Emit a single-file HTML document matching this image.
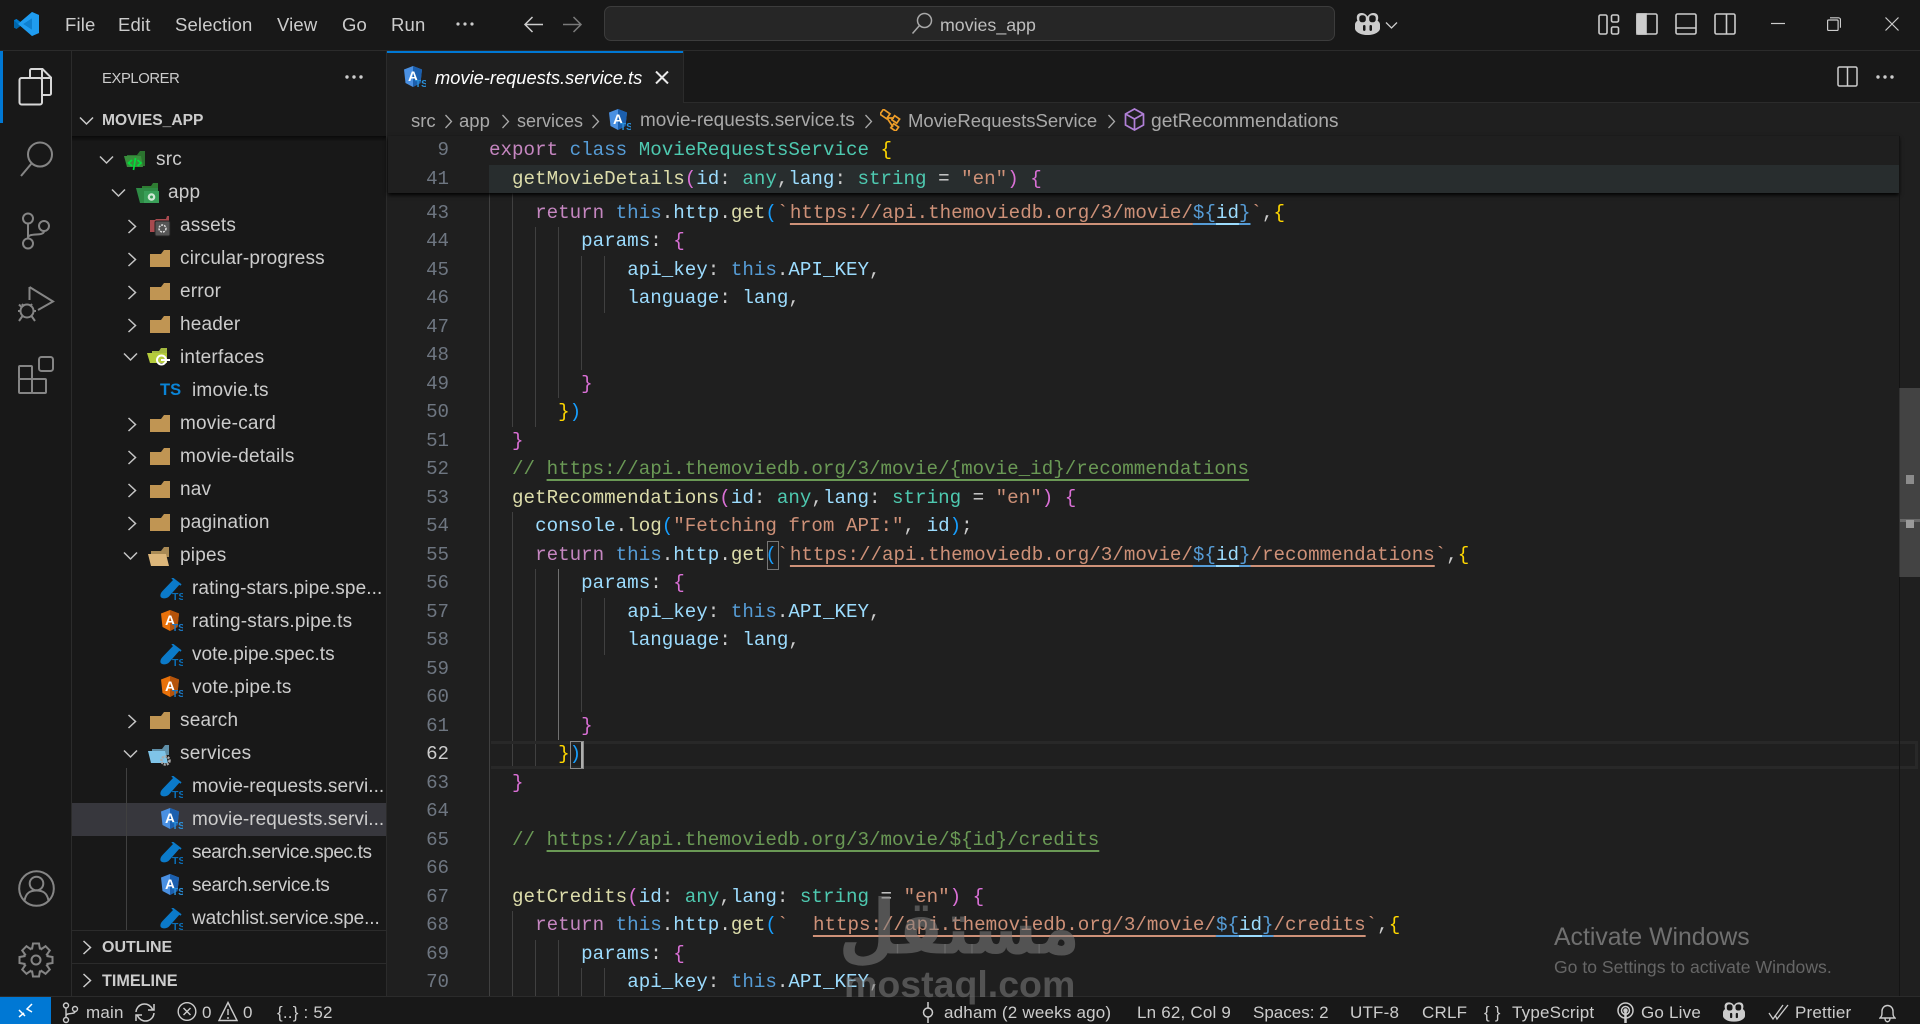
<!DOCTYPE html>
<html><head><meta charset="utf-8"><title>movies_app</title>
<style>
html,body{margin:0;padding:0;width:1920px;height:1024px;overflow:hidden;background:#1f1f1f}
body{position:relative;font-family:"Liberation Sans",sans-serif;color:#ccc}
.a,svg,.t,.r{position:absolute}
.t{white-space:pre;line-height:26px;height:26px}
.m{top:12px;font-size:18.5px;color:#ccc;letter-spacing:.15px}
.r{height:33px;line-height:33px;font-size:19px;letter-spacing:.2px;color:#ccc;white-space:pre}
.b{top:108px;font-size:18.5px;color:#a9a9a9}
.s{top:1000px;font-size:17px;color:#ccc;letter-spacing:.2px}
.code{position:absolute;left:489px;font-family:"Liberation Mono",monospace;font-size:19.2px;color:#ccc}
.code div{white-space:pre}
.code div,.nums div{height:28.5px;line-height:28.5px}
.nums{position:absolute;left:400px;width:49px;text-align:right;font-family:"Liberation Mono",monospace;font-size:19.13px;color:#6e7681}
.k{color:#c586c0}.c{color:#569cd6}.e{color:#4ec9b0}.f{color:#dcdcaa}.v{color:#9cdcfe}.q{color:#ce9178}.g{color:#6a9955}.y{color:#ffd700}.p{color:#da70d6}.w{color:#179fff}.o{color:#d4d4d4}
.u{text-decoration:underline;text-decoration-thickness:2px;text-underline-offset:5px;text-decoration-skip-ink:none}
.ml{margin-left:1.5px}
.gd{position:absolute;width:1px;background:#404040}
.act{background:#707070}
</style></head><body>

<!-- title bar -->
<div class="a" style="left:0;top:0;width:1920px;height:50px;background:#181818"></div>
<div class="a" style="left:0;top:50px;width:1920px;height:1px;background:#2b2b2b"></div>
<svg style="left:14px;top:12px" width="25" height="24" viewBox="0 0 25 24"><path fill="#0065a9" d="M18 0 7 10.500 2.500 7 0 8.300v7.400L2.500 17 7 13.500 18 24l7-3V3z"/><path fill="#007acc" d="M18 0 7 10.500 2.500 7 0 8.300 4 12l14-12z"/><path fill="#1f9cf0" d="M18 0l7 3v18l-7 3V6.500L9.500 12 18 17.500V24L4 12z"/><path fill="#0f80d0" d="M18 6.500 9.500 12 18 17.500z"/></svg>
<div class="t m" style="left:65px">File</div>
<div class="t m" style="left:118px">Edit</div>
<div class="t m" style="left:175px">Selection</div>
<div class="t m" style="left:277px">View</div>
<div class="t m" style="left:342px">Go</div>
<div class="t m" style="left:391px">Run</div>
<svg style="left:455px;top:20px" width="20" height="8"><circle cx="3" cy="4" r="1.600" fill="#ccc"/><circle cx="10" cy="4" r="1.600" fill="#ccc"/><circle cx="17" cy="4" r="1.600" fill="#ccc"/></svg>
<svg style="left:523px;top:15px" width="21" height="19" fill="none" stroke="#ccc" stroke-width="1.500"><path d="M20 9.500H2M9.500 2 2 9.500 9.500 17"/></svg>
<svg style="left:562px;top:15px" width="21" height="19" fill="none" stroke="#7a7a7a" stroke-width="1.500"><path d="M1 9.500h18M11.500 2 19 9.500 11.500 17"/></svg>
<div class="a" style="left:604px;top:6px;width:729px;height:33px;background:#262626;border:1px solid #3c3c3c;border-radius:7px"></div>
<svg style="left:911px;top:12px" width="22" height="23" fill="none" stroke="#a8a8a8" stroke-width="1.500"><circle cx="13.500" cy="8.500" r="7"/><path d="M8.500 13.500 1.500 21.500"/></svg>
<div class="t" style="left:940px;top:12px;font-size:17.800px;color:#bdbdbd">movies_app</div>
<svg style="left:1355px;top:13px" width="25" height="22" viewBox="0 0 25 22"><path fill="#ccc" d="M12.500 3.500C11 .8 8.500 0 6.200 0 3.500 0 1.800 1.800 1.800 4.500c0 1.200.2 2.300.6 3.200C1 8.500 0 10 0 11.500v4C0 18 4 22 12.500 22S25 18 25 15.500v-4c0-1.500-1-3-2.400-3.800.4-.9.600-2 .6-3.200C23.200 1.800 21.500 0 18.800 0c-2.300 0-4.800.8-6.300 3.500z"/><rect x="4.300" y="2.300" width="6.500" height="7" rx="2.600" fill="#181818"/><rect x="14.200" y="2.300" width="6.500" height="7" rx="2.600" fill="#181818"/><rect x="8" y="12" width="2.500" height="6" rx="1.200" fill="#181818"/><rect x="14.500" y="12" width="2.500" height="6" rx="1.200" fill="#181818"/></svg>
<svg style="left:1385px;top:21px" width="13" height="9" fill="none" stroke="#ccc" stroke-width="1.300"><path d="M1 1.500 6.500 7 12 1.500"/></svg>
<svg style="left:1598px;top:13px" width="22" height="22" fill="none" stroke="#ccc" stroke-width="1.600"><rect x="1" y="2" width="8" height="19" rx="1.500"/><rect x="13.500" y="2" width="7" height="7" rx="1.500"/><rect x="13.500" y="14" width="7" height="7" rx="1.500"/></svg>
<svg style="left:1636px;top:13px" width="22" height="22" fill="none" stroke="#ccc" stroke-width="1.600"><rect x="1" y="1" width="20" height="20" rx="1.500"/><rect x="1" y="1" width="9" height="20" fill="#ccc"/></svg>
<svg style="left:1675px;top:13px" width="22" height="22" fill="none" stroke="#ccc" stroke-width="1.600"><rect x="1" y="1" width="20" height="20" rx="1.500"/><path d="M1 15h20"/></svg>
<svg style="left:1714px;top:13px" width="22" height="22" fill="none" stroke="#ccc" stroke-width="1.600"><rect x="1" y="1" width="20" height="20" rx="1.500"/><path d="M12.500 1v20"/></svg>
<svg style="left:1771px;top:22px" width="14" height="3"><path d="M0 1.500h14" stroke="#ccc" stroke-width="1.200"/></svg>
<svg style="left:1827px;top:17px" width="14" height="14" fill="none" stroke="#ccc" stroke-width="1.200"><rect x=".6" y="3" width="10.500" height="10.500" rx="1"/><path d="M3 .8h8.500a2 2 0 0 1 2 2v8"/></svg>
<svg style="left:1885px;top:17px" width="14" height="14" fill="none" stroke="#ccc" stroke-width="1.200"><path d="M.5.500l13 13M13.500.500l-13 13"/></svg>

<!-- activity bar -->
<div class="a" style="left:0;top:51px;width:71px;height:945px;background:#181818"></div>
<div class="a" style="left:71px;top:51px;width:1px;height:945px;background:#2b2b2b"></div>
<div class="a" style="left:0;top:51px;width:3px;height:72px;background:#0078d4"></div>
<svg style="left:18px;top:68px" width="35" height="38" fill="none" stroke="#d7d7d7" stroke-width="2"><path d="M12 9V2.500a1.500 1.500 0 0 1 1.500-1.500h11L33 9.500V25.500a1.500 1.500 0 0 1-1.500 1.500H24"/><path d="M24 1v9h9"/><rect x="1.500" y="10" width="22.500" height="26.500" rx="2"/></svg>
<svg style="left:20px;top:141px" width="34" height="36" fill="none" stroke="#858585" stroke-width="2"><circle cx="20" cy="13.500" r="12"/><path d="M11.500 22.500 1 35"/></svg>
<svg style="left:21px;top:212px" width="30" height="38" fill="none" stroke="#858585" stroke-width="2"><circle cx="7" cy="6.500" r="5"/><circle cx="7" cy="31.500" r="5"/><circle cx="23" cy="14" r="5"/><path d="M7 11.500v15M7 26c0-6 16-1 16-7"/></svg>
<svg style="left:18px;top:285px" width="37" height="37" fill="none" stroke="#858585" stroke-width="2"><path d="M11.500 2 35 16.500 20 25"/><path d="M11.500 2v13"/><circle cx="9" cy="26" r="6.500"/><path d="M4 19l2 2.500M14 19l-2 2.500M0 26h2.500M15.500 26H18M1 36l3.500-5M17 36l-3.500-5M1 19.500l3 3"/></svg>
<svg style="left:18px;top:356px" width="37" height="38" fill="none" stroke="#858585" stroke-width="2"><rect x="1" y="10" width="13" height="13" rx="1"/><rect x="14" y="23" width="14" height="14" rx="1"/><rect x="1" y="23" width="13" height="14" rx="1"/><rect x="21" y="1" width="14" height="14" rx="2.500"/></svg>
<svg style="left:18px;top:870px" width="37" height="37" fill="none" stroke="#858585" stroke-width="2"><circle cx="18.500" cy="18.500" r="17.300"/><circle cx="18.500" cy="13.500" r="6.800"/><path d="M6.500 30.500c1.500-8 6-10 12-10s10.500 2 12 10"/></svg>
<svg style="left:18px;top:942px" width="36" height="36" fill="none" stroke="#858585" stroke-width="2"><circle cx="18" cy="18" r="12.500"/><circle cx="18" cy="18" r="4.500"/>
<g fill="#181818"><path d="M14 7.500 15 1.500h6L22 7.500"/><path transform="rotate(45 18 18)" d="M14 7.500 15 1.500h6L22 7.500"/><path transform="rotate(90 18 18)" d="M14 7.500 15 1.500h6L22 7.500"/><path transform="rotate(135 18 18)" d="M14 7.500 15 1.500h6L22 7.500"/><path transform="rotate(180 18 18)" d="M14 7.500 15 1.500h6L22 7.500"/><path transform="rotate(225 18 18)" d="M14 7.500 15 1.500h6L22 7.500"/><path transform="rotate(270 18 18)" d="M14 7.500 15 1.500h6L22 7.500"/><path transform="rotate(315 18 18)" d="M14 7.500 15 1.500h6L22 7.500"/></g></svg>

<!-- sidebar -->
<div class="a" style="left:72px;top:51px;width:314px;height:945px;background:#181818"></div>
<div class="a" style="left:386px;top:51px;width:1px;height:945px;background:#2b2b2b"></div>
<div class="t" style="left:102px;top:66px;font-size:14.800px;letter-spacing:-.4px;color:#ccc">EXPLORER</div>
<svg style="left:344px;top:73px" width="20" height="8"><circle cx="3" cy="4" r="1.700" fill="#ccc"/><circle cx="10" cy="4" r="1.700" fill="#ccc"/><circle cx="17" cy="4" r="1.700" fill="#ccc"/></svg>
<svg style="left:79px;top:116px" width="15" height="10" fill="none" stroke="#ccc" stroke-width="1.500"><path d="M1 1.500 7.500 8 14 1.500"/></svg>
<div class="t" style="left:102px;top:108px;font-size:15.600px;font-weight:bold;color:#ccc">MOVIES_APP</div>
<div class="a" style="left:72px;top:136px;width:314px;height:5px;background:linear-gradient(#0a0a0a,#161616)"></div>

<div class="a" style="left:72px;top:803px;width:314px;height:33px;background:#37373d"></div>
<div class="a" style="left:126px;top:768px;width:1px;height:162px;background:#404040"></div>

<svg style="left:99px;top:155px" width="15" height="10" fill="none" stroke="#c5c5c5" stroke-width="1.500"><path d="M1 1.500 7.500 8 14 1.500"/></svg>
<svg style="left:124px;top:150px" width="23" height="21"><path fill="#2e7d32" d="M3 5h10l3-4h5v15H3z" opacity=".9"/><path fill="#388e3c" d="M0 6h17l2 11H3z"/><path fill="none" stroke="#00e03a" stroke-width="1.700" d="M8 10l-3.500 3 3.500 3M13.500 10l3.500 3-3.500 3M11.500 8l-2 12"/></svg>
<div class="r" style="left:156px;top:143px">src</div>
<svg style="left:111px;top:188px" width="15" height="10" fill="none" stroke="#c5c5c5" stroke-width="1.500"><path d="M1 1.500 7.500 8 14 1.500"/></svg>
<svg style="left:136px;top:183px" width="23" height="21"><path fill="#2e7d32" d="M6 3h9l2-3h5v8H6z"/><path fill="#2e8b45" d="M0 5h22v15H4z"/><path fill="#399f58" d="M8 8h15v12H8z"/><circle cx="15.500" cy="14" r="3.800" fill="#cfe8d5"/><circle cx="15.500" cy="14" r="1.500" fill="#399f58"/></svg>
<div class="r" style="left:168px;top:176px">app</div>
<svg style="left:127px;top:219px" width="10" height="15" fill="none" stroke="#c5c5c5" stroke-width="1.500"><path d="M1.500 1 8.500 7.500 1.500 14"/></svg>
<svg style="left:150px;top:216px" width="21" height="21"><path fill="#a84a4f" d="M0 4h5l1-1h10l1-3h2v16H0z"/><rect x="5" y="5" width="15" height="15" rx="1.500" fill="#555" stroke="#222" stroke-width="1"/><circle cx="12.500" cy="12.500" r="3.500" fill="none" stroke="#ddd" stroke-width="1.500" stroke-dasharray="2 1"/></svg>
<div class="r" style="left:180px;top:209px">assets</div>
<svg style="left:127px;top:252px" width="10" height="15" fill="none" stroke="#c5c5c5" stroke-width="1.500"><path d="M1.500 1 8.500 7.500 1.500 14"/></svg>
<svg style="left:150px;top:250px" width="20" height="17"><path fill="#c09553" d="M0 4h11l3-4h6v17H0z"/></svg>
<div class="r" style="left:180px;top:242px">circular-progress</div>
<svg style="left:127px;top:285px" width="10" height="15" fill="none" stroke="#c5c5c5" stroke-width="1.500"><path d="M1.500 1 8.500 7.500 1.500 14"/></svg>
<svg style="left:150px;top:283px" width="20" height="17"><path fill="#c09553" d="M0 4h11l3-4h6v17H0z"/></svg>
<div class="r" style="left:180px;top:275px">error</div>
<svg style="left:127px;top:318px" width="10" height="15" fill="none" stroke="#c5c5c5" stroke-width="1.500"><path d="M1.500 1 8.500 7.500 1.500 14"/></svg>
<svg style="left:150px;top:316px" width="20" height="17"><path fill="#c09553" d="M0 4h11l3-4h6v17H0z"/></svg>
<div class="r" style="left:180px;top:308px">header</div>
<svg style="left:123px;top:352px" width="15" height="10" fill="none" stroke="#c5c5c5" stroke-width="1.500"><path d="M1 1.500 7.500 8 14 1.500"/></svg>
<svg style="left:147px;top:348px" width="24" height="19"><path fill="#a3b93f" d="M5 3h7l2-3h6v9H5z"/><path fill="#b5cc3c" d="M0 5h20v10H3z"/><circle cx="14.500" cy="12" r="4.500" fill="none" stroke="#fff" stroke-width="2"/><path d="M14 12h9" stroke="#fff" stroke-width="2"/></svg>
<div class="r" style="left:180px;top:341px">interfaces</div>
<div class="t" style="left:160px;top:377px;font-size:16.500px;font-weight:bold;color:#0a84d6">TS</div>
<div class="r" style="left:192px;top:374px">imovie.ts</div>
<svg style="left:127px;top:417px" width="10" height="15" fill="none" stroke="#c5c5c5" stroke-width="1.500"><path d="M1.500 1 8.500 7.500 1.500 14"/></svg>
<svg style="left:150px;top:415px" width="20" height="17"><path fill="#c09553" d="M0 4h11l3-4h6v17H0z"/></svg>
<div class="r" style="left:180px;top:407px">movie-card</div>
<svg style="left:127px;top:450px" width="10" height="15" fill="none" stroke="#c5c5c5" stroke-width="1.500"><path d="M1.500 1 8.500 7.500 1.500 14"/></svg>
<svg style="left:150px;top:448px" width="20" height="17"><path fill="#c09553" d="M0 4h11l3-4h6v17H0z"/></svg>
<div class="r" style="left:180px;top:440px">movie-details</div>
<svg style="left:127px;top:483px" width="10" height="15" fill="none" stroke="#c5c5c5" stroke-width="1.500"><path d="M1.500 1 8.500 7.500 1.500 14"/></svg>
<svg style="left:150px;top:481px" width="20" height="17"><path fill="#c09553" d="M0 4h11l3-4h6v17H0z"/></svg>
<div class="r" style="left:180px;top:473px">nav</div>
<svg style="left:127px;top:516px" width="10" height="15" fill="none" stroke="#c5c5c5" stroke-width="1.500"><path d="M1.500 1 8.500 7.500 1.500 14"/></svg>
<svg style="left:150px;top:514px" width="20" height="17"><path fill="#c09553" d="M0 4h11l3-4h6v17H0z"/></svg>
<div class="r" style="left:180px;top:506px">pagination</div>
<svg style="left:123px;top:551px" width="15" height="10" fill="none" stroke="#c5c5c5" stroke-width="1.500"><path d="M1 1.500 7.500 8 14 1.500"/></svg>
<svg style="left:148px;top:547px" width="22" height="19"><path fill="#a98a55" d="M3 4h10l3-4h5v10H3z"/><path fill="#dcb67a" d="M0 7h18l3 12H3z"/></svg>
<div class="r" style="left:180px;top:539px">pipes</div>

<svg style="left:160px;top:578px" width="23" height="22"><path fill="#0b7ac9" d="M14 1 20 6 9 18.500C6.500 21 1.500 21 .5 18.500 0 16 1.500 14 3 12.500z"/><path stroke="#0b7ac9" stroke-width="1.800" fill="none" d="M12 0l9 7"/><text x="12" y="22" font-size="10.500" font-weight="bold" fill="#0b6fb8" font-family="Liberation Sans,sans-serif">TS</text></svg>
<div class="r" style="left:192px;top:572px;letter-spacing:.1px">rating-stars.pipe.spe...</div>
<svg style="left:161px;top:610px" width="22" height="22"><path fill="#e8710a" d="M9 0 18 3.500 16.500 17 9 21 1.500 17 0 3.500z"/><path fill="#b5530a" d="M9 0 18 3.500 16.500 17 9 21z"/><text x="4" y="15" font-size="14" font-weight="bold" fill="#fff" font-family="Liberation Sans,sans-serif">A</text><text x="11" y="21" font-size="10" font-weight="bold" fill="#1b78c4" font-family="Liberation Sans,sans-serif">TS</text></svg>
<div class="r" style="left:192px;top:605px">rating-stars.pipe.ts</div>
<svg style="left:160px;top:644px" width="23" height="22"><path fill="#0b7ac9" d="M14 1 20 6 9 18.500C6.500 21 1.500 21 .5 18.500 0 16 1.500 14 3 12.500z"/><path stroke="#0b7ac9" stroke-width="1.800" fill="none" d="M12 0l9 7"/><text x="12" y="22" font-size="10.500" font-weight="bold" fill="#0b6fb8" font-family="Liberation Sans,sans-serif">TS</text></svg>
<div class="r" style="left:192px;top:638px;letter-spacing:0">vote.pipe.spec.ts</div>
<svg style="left:161px;top:676px" width="22" height="22"><path fill="#e8710a" d="M9 0 18 3.500 16.500 17 9 21 1.500 17 0 3.500z"/><path fill="#b5530a" d="M9 0 18 3.500 16.500 17 9 21z"/><text x="4" y="15" font-size="14" font-weight="bold" fill="#fff" font-family="Liberation Sans,sans-serif">A</text><text x="11" y="21" font-size="10" font-weight="bold" fill="#1b78c4" font-family="Liberation Sans,sans-serif">TS</text></svg>
<div class="r" style="left:192px;top:671px">vote.pipe.ts</div>
<svg style="left:127px;top:714px" width="10" height="15" fill="none" stroke="#c5c5c5" stroke-width="1.500"><path d="M1.500 1 8.500 7.500 1.500 14"/></svg>
<svg style="left:150px;top:712px" width="20" height="17"><path fill="#c09553" d="M0 4h11l3-4h6v17H0z"/></svg>
<div class="r" style="left:180px;top:704px">search</div>
<svg style="left:123px;top:749px" width="15" height="10" fill="none" stroke="#c5c5c5" stroke-width="1.500"><path d="M1 1.500 7.500 8 14 1.500"/></svg>
<svg style="left:148px;top:745px" width="24" height="21"><path fill="#5f8fa8" d="M4 4h10l3-4h4v10H4z"/><path fill="#7fc4e8" d="M0 6h17l3 12H3z"/><circle cx="17.500" cy="15.500" r="4" fill="none" stroke="#aaa" stroke-width="2.500" stroke-dasharray="2 1"/></svg>
<div class="r" style="left:180px;top:737px">services</div>
<svg style="left:160px;top:776px" width="23" height="22"><path fill="#0b7ac9" d="M14 1 20 6 9 18.500C6.500 21 1.500 21 .5 18.500 0 16 1.500 14 3 12.500z"/><path stroke="#0b7ac9" stroke-width="1.800" fill="none" d="M12 0l9 7"/><text x="12" y="22" font-size="10.500" font-weight="bold" fill="#0b6fb8" font-family="Liberation Sans,sans-serif">TS</text></svg>
<div class="r" style="left:192px;top:770px;letter-spacing:.05px">movie-requests.servi...</div>
<svg style="left:161px;top:808px" width="22" height="22"><path fill="#4a90e2" d="M9 0 18 3.500 16.500 17 9 21 1.500 17 0 3.500z"/><path fill="#1b5fae" d="M9 0 18 3.500 16.500 17 9 21z"/><text x="4" y="15" font-size="14" font-weight="bold" fill="#fff" font-family="Liberation Sans,sans-serif">A</text><text x="11" y="21" font-size="10" font-weight="bold" fill="#2b8fd8" font-family="Liberation Sans,sans-serif">TS</text></svg>
<div class="r" style="left:192px;top:803px;letter-spacing:.05px">movie-requests.servi...</div>
<svg style="left:160px;top:842px" width="23" height="22"><path fill="#0b7ac9" d="M14 1 20 6 9 18.500C6.500 21 1.500 21 .5 18.500 0 16 1.500 14 3 12.500z"/><path stroke="#0b7ac9" stroke-width="1.800" fill="none" d="M12 0l9 7"/><text x="12" y="22" font-size="10.500" font-weight="bold" fill="#0b6fb8" font-family="Liberation Sans,sans-serif">TS</text></svg>
<div class="r" style="left:192px;top:836px;letter-spacing:-.38px">search.service.spec.ts</div>
<svg style="left:161px;top:874px" width="22" height="22"><path fill="#4a90e2" d="M9 0 18 3.500 16.500 17 9 21 1.500 17 0 3.500z"/><path fill="#1b5fae" d="M9 0 18 3.500 16.500 17 9 21z"/><text x="4" y="15" font-size="14" font-weight="bold" fill="#fff" font-family="Liberation Sans,sans-serif">A</text><text x="11" y="21" font-size="10" font-weight="bold" fill="#2b8fd8" font-family="Liberation Sans,sans-serif">TS</text></svg>
<div class="r" style="left:192px;top:869px;letter-spacing:-.3px">search.service.ts</div>
<svg style="left:160px;top:908px" width="23" height="22"><path fill="#0b7ac9" d="M14 1 20 6 9 18.500C6.500 21 1.500 21 .5 18.500 0 16 1.500 14 3 12.500z"/><path stroke="#0b7ac9" stroke-width="1.800" fill="none" d="M12 0l9 7"/><text x="12" y="22" font-size="10.500" font-weight="bold" fill="#0b6fb8" font-family="Liberation Sans,sans-serif">TS</text></svg>
<div class="r" style="left:192px;top:902px;letter-spacing:-.1px">watchlist.service.spe...</div>

<div class="a" style="left:72px;top:930px;width:314px;height:66px;background:#181818"></div>
<div class="a" style="left:72px;top:930px;width:314px;height:1px;background:#2b2b2b"></div>
<div class="a" style="left:72px;top:963px;width:314px;height:1px;background:#2b2b2b"></div>
<svg style="left:82px;top:940px" width="10" height="15" fill="none" stroke="#ccc" stroke-width="1.500"><path d="M1.500 1 8.500 7.500 1.500 14"/></svg>
<div class="t" style="left:102px;top:935px;font-size:16px;font-weight:bold;color:#ccc">OUTLINE</div>
<svg style="left:82px;top:973px" width="10" height="15" fill="none" stroke="#ccc" stroke-width="1.500"><path d="M1.500 1 8.500 7.500 1.500 14"/></svg>
<div class="t" style="left:102px;top:968px;font-size:16.200px;font-weight:bold;color:#ccc">TIMELINE</div>

<!-- tabs -->
<div class="a" style="left:387px;top:51px;width:1533px;height:51px;background:#181818"></div>
<div class="a" style="left:387px;top:102px;width:1533px;height:1px;background:#2b2b2b"></div>
<div class="a" style="left:387px;top:51px;width:296px;height:52px;background:#1f1f1f"></div>
<div class="a" style="left:387px;top:51px;width:296px;height:2px;background:#0078d4"></div>
<div class="a" style="left:683px;top:51px;width:1px;height:51px;background:#2b2b2b"></div>
<svg style="left:404px;top:66px" width="22" height="22"><path fill="#4a90e2" d="M9 0 18 3.500 16.500 17 9 21 1.500 17 0 3.500z"/><path fill="#1b5fae" d="M9 0 18 3.500 16.500 17 9 21z"/><text x="4" y="15" font-size="14" font-weight="bold" fill="#fff" font-family="Liberation Sans,sans-serif">A</text><text x="11" y="21" font-size="10" font-weight="bold" fill="#2b8fd8" font-family="Liberation Sans,sans-serif">TS</text></svg>
<div class="t" style="left:435px;top:65px;font-size:18.300px;font-style:italic;color:#fff">movie-requests.service.ts</div>
<svg style="left:655px;top:71px" width="14" height="13" fill="none" stroke="#e8e8e8" stroke-width="2"><path d="M1 .500l12 12M13 .500l-12 12"/></svg>
<svg style="left:1837px;top:66px" width="21" height="21" fill="none" stroke="#ccc" stroke-width="1.500"><rect x="1" y="1" width="19" height="19" rx="1.500"/><path d="M10.500 1v19"/></svg>
<svg style="left:1875px;top:73px" width="20" height="8"><circle cx="3" cy="4" r="1.700" fill="#ccc"/><circle cx="10" cy="4" r="1.700" fill="#ccc"/><circle cx="17" cy="4" r="1.700" fill="#ccc"/></svg>

<!-- breadcrumbs -->
<div class="t b" style="left:411px">src</div>
<svg style="left:444px;top:114px" width="9" height="15" fill="none" stroke="#a9a9a9" stroke-width="1.300"><path d="M1.500 1 7.500 7.500 1.500 14"/></svg>
<div class="t b" style="left:459px">app</div>
<svg style="left:501px;top:114px" width="9" height="15" fill="none" stroke="#a9a9a9" stroke-width="1.300"><path d="M1.500 1 7.500 7.500 1.500 14"/></svg>
<div class="t b" style="left:517px;font-size:18px">services</div>
<svg style="left:591px;top:114px" width="9" height="15" fill="none" stroke="#a9a9a9" stroke-width="1.300"><path d="M1.500 1 7.500 7.500 1.500 14"/></svg>
<svg style="left:609px;top:109px" width="22" height="22"><path fill="#4a90e2" d="M9 0 18 3.500 16.500 17 9 21 1.500 17 0 3.500z"/><path fill="#1b5fae" d="M9 0 18 3.500 16.500 17 9 21z"/><text x="4" y="15" font-size="14" font-weight="bold" fill="#fff" font-family="Liberation Sans,sans-serif">A</text><text x="11" y="21" font-size="10" font-weight="bold" fill="#2b8fd8" font-family="Liberation Sans,sans-serif">TS</text></svg>
<div class="t b" style="left:640px;font-size:18.950px">movie-requests.service.ts</div>
<svg style="left:864px;top:114px" width="9" height="15" fill="none" stroke="#a9a9a9" stroke-width="1.300"><path d="M1.500 1 7.500 7.500 1.500 14"/></svg>
<svg style="left:880px;top:109px" width="22" height="22" fill="none" stroke="#ee9d28" stroke-width="1.700"><rect x="1" y="2" width="8" height="6" transform="rotate(35 5 5)"/><rect x="13" y="8" width="6" height="5" transform="rotate(35 16 10)"/><rect x="12" y="16" width="6" height="5" transform="rotate(35 15 18)"/><path d="M7 9l6 9M8 9h6"/></svg>
<div class="t b" style="left:908px">MovieRequestsService</div>
<svg style="left:1107px;top:114px" width="9" height="15" fill="none" stroke="#a9a9a9" stroke-width="1.300"><path d="M1.500 1 7.500 7.500 1.500 14"/></svg>
<svg style="left:1124px;top:108px" width="21" height="23" fill="none" stroke="#b180d7" stroke-width="1.700"><path d="M10.500 1 19.500 6v11l-9 5-9-5V6z"/><path d="M1.500 6l9 5 9-5M10.500 11v11"/></svg>
<div class="t b" style="left:1151px;top:109px;font-size:19.300px">getRecommendations</div>

<!-- indent guides -->
<div class="gd" style="left:489px;top:193px;height:803px"></div>
<div class="gd" style="left:512px;top:193px;height:234px"></div>
<div class="gd" style="left:535px;top:227px;height:200px"></div>
<div class="gd" style="left:558px;top:227px;height:171px"></div>
<div class="gd" style="left:581px;top:256px;height:114px"></div>
<div class="gd" style="left:604px;top:256px;height:57px"></div>
<div class="gd" style="left:512px;top:512px;height:257px"></div>
<div class="gd" style="left:535px;top:569px;height:200px"></div>
<div class="gd act" style="left:558px;top:569px;height:171px"></div>
<div class="gd" style="left:581px;top:598px;height:114px"></div>
<div class="gd" style="left:604px;top:598px;height:57px"></div>
<div class="gd" style="left:512px;top:911px;height:85px"></div>
<div class="gd" style="left:535px;top:940px;height:56px"></div>
<div class="gd" style="left:558px;top:940px;height:56px"></div>
<div class="gd" style="left:581px;top:968px;height:28px"></div>
<div class="gd" style="left:604px;top:968px;height:28px"></div>

<!-- current line -->
<div class="a" style="left:491px;top:741px;width:1427px;height:28px;box-sizing:border-box;border-top:3px solid #282828;border-bottom:3px solid #282828;border-right:3px solid #282828"></div>
<!-- bracket boxes -->
<div class="a" style="left:570px;top:741px;width:12px;height:26px;border:1px solid #888"></div>
<div class="a" style="left:581px;top:742px;width:2px;height:26px;background:#aeafad"></div>
<div class="a" style="left:767px;top:541px;width:10px;height:27px;border:1px solid #777"></div>

<!-- line numbers -->
<div class="nums" style="top:198.750px">
<div>43</div><div>44</div><div>45</div><div>46</div><div>47</div><div>48</div><div>49</div><div>50</div><div>51</div><div>52</div><div>53</div><div>54</div><div>55</div><div>56</div><div>57</div><div>58</div><div>59</div><div>60</div><div>61</div><div style="color:#ccc">62</div><div>63</div><div>64</div><div>65</div><div>66</div><div>67</div><div>68</div><div>69</div><div>70</div>
</div>

<!-- code -->
<div class="code" style="top:198.750px">
<div>    <span class="k">return</span> <span class="c">this</span>.<span class="v">http</span>.<span class="f">get</span><span class="w">(</span><span class="q">`</span><span class="q u ml">https://api.themoviedb.org/3/movie/</span><span class="c u">${</span><span class="v u">id</span><span class="c u">}</span><span class="q">`</span>,<span class="y">{</span></div>
<div>        <span class="v">params</span>: <span class="p">{</span></div>
<div>            <span class="v">api_key</span>: <span class="c">this</span>.<span class="v">API_KEY</span>,</div>
<div>            <span class="v">language</span>: <span class="v">lang</span>,</div>
<div> </div>
<div> </div>
<div>        <span class="p">}</span></div>
<div>      <span class="y">}</span><span class="w">)</span></div>
<div>  <span class="p">}</span></div>
<div>  <span class="g">// </span><span class="g u">https://api.themoviedb.org/3/movie/{movie_id}/recommendations</span></div>
<div>  <span class="f">getRecommendations</span><span class="p">(</span><span class="v">id</span>: <span class="e">any</span>,<span class="v">lang</span>: <span class="e">string</span> <span class="o">=</span> <span class="q">"en"</span><span class="p">)</span> <span class="p">{</span></div>
<div>    <span class="v">console</span>.<span class="f">log</span><span class="w">(</span><span class="q">"Fetching from API:"</span>, <span class="v">id</span><span class="w">)</span>;</div>
<div>    <span class="k">return</span> <span class="c">this</span>.<span class="v">http</span>.<span class="f">get</span><span class="w">(</span><span class="q">`</span><span class="q u ml">https://api.themoviedb.org/3/movie/</span><span class="c u">${</span><span class="v u">id</span><span class="c u">}</span><span class="q u">/recommendations</span><span class="q">`</span>,<span class="y">{</span></div>
<div>        <span class="v">params</span>: <span class="p">{</span></div>
<div>            <span class="v">api_key</span>: <span class="c">this</span>.<span class="v">API_KEY</span>,</div>
<div>            <span class="v">language</span>: <span class="v">lang</span>,</div>
<div> </div>
<div> </div>
<div>        <span class="p">}</span></div>
<div>      <span class="y">}</span><span class="w">)</span></div>
<div>  <span class="p">}</span></div>
<div> </div>
<div>  <span class="g">// </span><span class="g u">https://api.themoviedb.org/3/movie/${id}/credits</span></div>
<div> </div>
<div>  <span class="f">getCredits</span><span class="p">(</span><span class="v">id</span>: <span class="e">any</span>,<span class="v">lang</span>: <span class="e">string</span> <span class="o">=</span> <span class="q">"en"</span><span class="p">)</span> <span class="p">{</span></div>
<div>    <span class="k">return</span> <span class="c">this</span>.<span class="v">http</span>.<span class="f">get</span><span class="w">(</span><span class="q">`  </span><span class="q u ml">https://api.themoviedb.org/3/movie/</span><span class="c u">${</span><span class="v u">id</span><span class="c u">}</span><span class="q u">/credits</span><span class="q">`</span>,<span class="y">{</span></div>
<div>        <span class="v">params</span>: <span class="p">{</span></div>
<div>            <span class="v">api_key</span>: <span class="c">this</span>.<span class="v">API_KEY</span>,</div>
</div>

<!-- sticky scroll -->
<div class="a" style="left:388px;top:136px;width:1511px;height:57px;background:#1f1f1f;box-shadow:0 2px 4px #000"></div>
<div class="a" style="left:489px;top:165px;width:1410px;height:28px;background:#282d2e"></div>
<div class="nums" style="top:136px"><div>9</div><div>41</div></div>
<div class="code" style="top:136px">
<div><span class="k">export</span> <span class="c">class</span> <span class="e">MovieRequestsService</span> <span class="y">{</span></div>
<div>  <span class="f">getMovieDetails</span><span class="p">(</span><span class="v">id</span>: <span class="e">any</span>,<span class="v">lang</span>: <span class="e">string</span> <span class="o">=</span> <span class="q">"en"</span><span class="p">)</span> <span class="p">{</span></div>
</div>

<!-- scrollbar -->
<div class="a" style="left:1899px;top:136px;width:1px;height:860px;background:#141414"></div>
<div class="a" style="left:1900px;top:388px;width:20px;height:189px;background:#434343"></div>
<div class="a" style="left:1899px;top:388px;width:1px;height:189px;background:#333"></div>
<div class="a" style="left:1906px;top:475px;width:8px;height:9px;background:#8c8c8c"></div>
<div class="a" style="left:1900px;top:519px;width:20px;height:3px;background:#6a6a6a"></div>
<div class="a" style="left:1906px;top:520px;width:8px;height:8px;background:#9a9a9a"></div>

<!-- activate windows -->
<div class="t" style="left:1554px;top:924px;font-size:24.800px;line-height:28px;height:28px;color:#707070">Activate Windows</div>
<div class="t" style="left:1554px;top:954px;font-size:17.600px;color:#666">Go to Settings to activate Windows.</div>

<!-- status bar -->
<div class="a" style="left:0;top:996px;width:1920px;height:28px;background:#181818"></div>
<div class="a" style="left:0;top:996px;width:1920px;height:1px;background:#2b2b2b"></div>
<div class="a" style="left:0;top:997px;width:51px;height:27px;background:#0078d4"></div>
<svg style="left:18px;top:1003px" width="16" height="15" fill="none" stroke="#fff" stroke-width="1.500"><path d="M1 7l6 6M1 14l5-4M14 1L9 6l5 3"/></svg>
<svg style="left:62px;top:1002px" width="17" height="22" fill="none" stroke="#ccc" stroke-width="1.400"><circle cx="4" cy="3.500" r="2.500"/><circle cx="4" cy="18" r="2.500"/><circle cx="13" cy="7" r="2.500"/><path d="M4 6v9.500M4 14c0-4 9-1 9-4.500"/></svg>
<div class="t s" style="left:86px">main</div>
<svg style="left:134px;top:1002px" width="22" height="21" fill="none" stroke="#ccc" stroke-width="1.500"><path d="M2 10a8.500 8.500 0 0 1 15-5l2 3M20 11a8.500 8.500 0 0 1-15 5l-2-3M20 2v6h-6M2 19v-6h6"/></svg>
<svg style="left:177px;top:1001px" width="20" height="21" fill="none" stroke="#ccc" stroke-width="1.400"><circle cx="10" cy="10.500" r="8.800"/><path d="M6.500 7l7 7M13.500 7l-7 7"/></svg>
<div class="t s" style="left:202px">0</div>
<svg style="left:218px;top:1001px" width="20" height="21" fill="none" stroke="#ccc" stroke-width="1.400"><path d="M10 1.500 19 19.500H1zM10 8v6M10 16v2"/></svg>
<div class="t s" style="left:243px">0</div>
<div class="t s" style="left:277px">{..} : 52</div>
<svg style="left:921px;top:1002px" width="14" height="21" fill="none" stroke="#ccc" stroke-width="1.500"><circle cx="7" cy="10.500" r="4.500"/><path d="M7 0v6M7 15v6"/></svg>
<div class="t s" style="left:944px">adham (2 weeks ago)</div>
<div class="t s" style="left:1137px">Ln 62, Col 9</div>
<div class="t s" style="left:1253px;letter-spacing:0">Spaces: 2</div>
<div class="t s" style="left:1350px">UTF-8</div>
<div class="t s" style="left:1422px">CRLF</div>
<div class="t s" style="left:1484px">{ }</div>
<div class="t s" style="left:1512px">TypeScript</div>
<svg style="left:1617px;top:1002px" width="17" height="21" fill="none" stroke="#ccc" stroke-width="1.500"><circle cx="8.500" cy="8.500" r="7.500"/><circle cx="8.500" cy="8.500" r="4"/><circle cx="8.500" cy="8.500" r="1.500" fill="#ccc"/><path d="M8.500 10v11" stroke-width="2.500"/></svg>
<div class="t s" style="left:1641px">Go Live</div>
<svg style="left:1723px;top:1002px" width="22" height="20" viewBox="0 0 25 22"><path fill="#ccc" d="M12.500 3.500C11 .8 8.500 0 6.200 0 3.500 0 1.800 1.800 1.800 4.500c0 1.200.2 2.300.6 3.200C1 8.500 0 10 0 11.500v4C0 18 4 22 12.500 22S25 18 25 15.500v-4c0-1.500-1-3-2.400-3.800.4-.9.600-2 .6-3.200C23.200 1.800 21.500 0 18.800 0c-2.300 0-4.800.8-6.300 3.500z"/><rect x="4.300" y="2.300" width="6.500" height="7" rx="2.600" fill="#181818"/><rect x="14.200" y="2.300" width="6.500" height="7" rx="2.600" fill="#181818"/><rect x="8" y="12" width="2.500" height="6" rx="1.200" fill="#181818"/><rect x="14.500" y="12" width="2.500" height="6" rx="1.200" fill="#181818"/></svg>
<svg style="left:1768px;top:1004px" width="21" height="17" fill="none" stroke="#ccc" stroke-width="1.300"><path d="M1 9l4 6L15 1M7 11l2 4L20 1"/></svg>
<div class="t s" style="left:1795px">Prettier</div>
<svg style="left:1879px;top:1002px" width="17" height="21" fill="none" stroke="#ccc" stroke-width="1.400"><path d="M1 16c2-2 2-3 2-7a5.500 5.500 0 0 1 11 0c0 4 0 5 2 7zM6 16c0 5 5 5 5 0"/></svg>

<!-- watermark -->
<div class="t" dir="rtl" style="left:840px;top:888px;width:240px;height:80px;line-height:80px;font-family:'DejaVu Sans',sans-serif;font-size:66px;font-weight:bold;text-align:center;color:rgba(125,125,125,.55);transform:scaleY(1.15)">مستقل</div>
<div class="t" style="left:844px;top:964px;height:40px;line-height:40px;font-size:37.500px;font-weight:bold;color:rgba(125,125,125,.55)">mostaql.com</div>
</body></html>
